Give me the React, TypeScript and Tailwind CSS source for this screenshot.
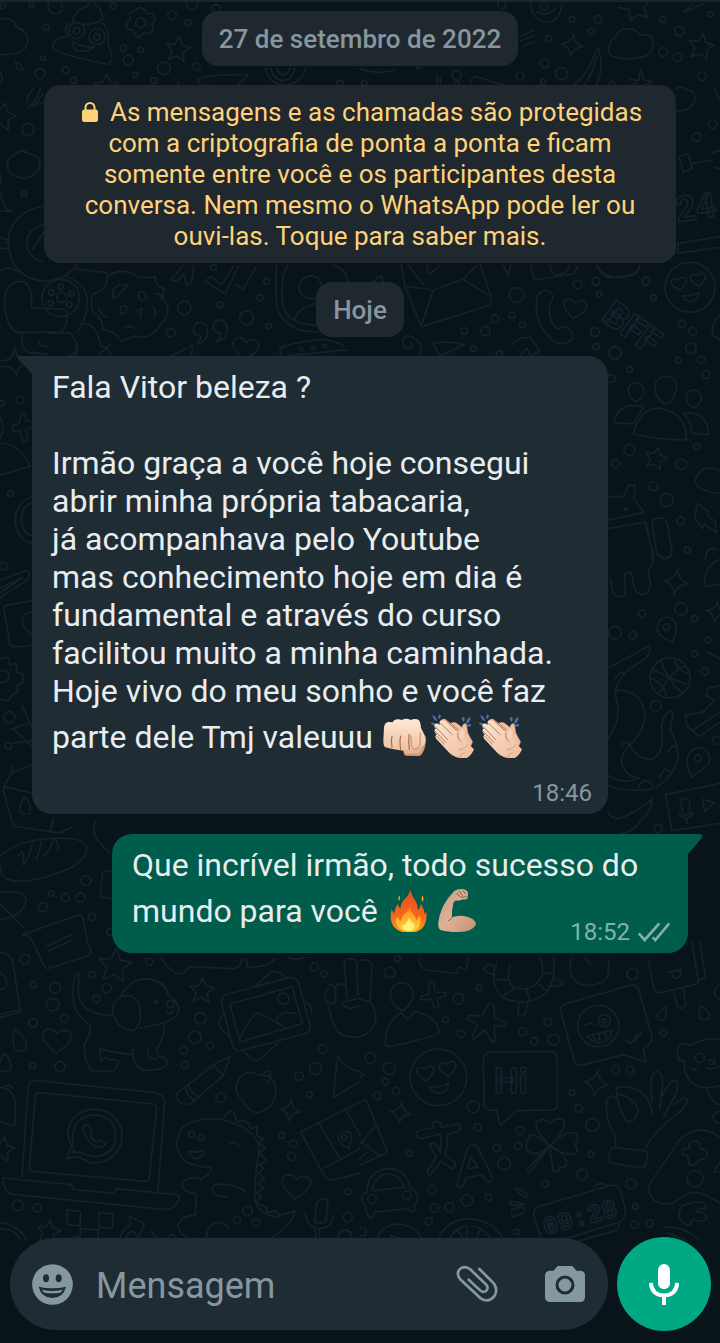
import { ReactNode } from "react";

type Ring = [number, number, number];

const topRings: Ring[] = [
    [166, 14, 22], [138, 76, 9], [128, 169, 7], [120, 215, 15], [197, 204, 10], [220, 235, 9], [370, 138, 9], [385, 175, 15],
    [422, 144, 8], [516, 40, 13], [564, 62, 9], [590, 194, 11], [492, 199, 19], [407, 219, 8], [462, 236, 9], [340, 12, 9],
    [576, 8, 16], [648, 20, 12], [84, 382, 18], [72, 576, 8], [8, 12, 9], [95, 8, 7], [553, 918, 20], [660, 908, 9], [740, 948, 21],
    [512, 992, 13], [800, 838, 9], [780, 888, 9], [806, 972, 8], [640, 796, 9], [185, 886, 15], [1020, 245, 9],
    [1120, 40, 9], [1370, 244, 7], [1290, 1076, 9],
];

const topRightRings: Ring[] = [
    [636, 52, 9], [714, 53, 12], [694, 88, 9], [566, 110, 9], [554, 184, 13], [604, 215, 18], [550, 240, 8], [480, 222, 12],
    [290, 220, 14], [178, 192, 8], [958, 87, 14], [908, 52, 9], [910, 150, 13], [953, 166, 13], [1026, 223, 13], [756, 247, 9],
    [1058, 367, 13], [1010, 405, 13], [1052, 36, 8], [425, 8, 12], [470, 879, 22], [653, 848, 13], [708, 838, 11], [718, 876, 8],
    [858, 838, 12], [880, 888, 9], [405, 950, 11], [456, 940, 9], [487, 969, 9], [377, 988, 14], [313, 987, 10], [705, 990, 12],
    [708, 1034, 9], [766, 1052, 18], [340, 1040, 8], [418, 1056, 10], [13, 243, 8],
];

const rightRings: Ring[] = [
    [18, 58, 12], [168, 56, 12], [190, 107, 9], [14, 210, 13], [18, 254, 9], [75, 273, 19], [276, 186, 11], [308, 208, 12],
    [303, 259, 16], [265, 295, 9], [333, 293, 11], [348, 337, 12], [119, 323, 9], [63, 350, 12], [118, 564, 16], [77, 605, 12],
    [274, 607, 16], [321, 553, 10], [190, 673, 13], [230, 714, 20], [272, 777, 12], [292, 864, 9],
    [157, 1055, 11], [75, 1112, 19], [129, 1120, 11], [273, 1041, 19], [313, 1070, 9], [353, 1134, 9], [314, 1176, 9], [344, 1229, 11],
    [197, 1332, 16], [204, 1700, 13], [380, 1435, 12],
];

const leftRings: Ring[] = [
    [60, 174, 12], [4, 184, 8], [31, 455, 9], [28, 1126, 17], [25, 1212, 10], [10, 673, 12], [258, 1616, 15], [154, 1655, 8],
    [196, 1667, 12], [241, 1667, 14], [129, 1696, 14], [276, 1725, 11], [330, 1770, 10],
];

const bottomRings: Ring[] = [
    [75, 51, 15], [99, 128, 9], [165, 137, 16], [158, 188, 19], [99, 243, 13], [193, 229, 12], [277, 98, 10], [320, 139, 14],
    [289, 171, 11], [98, 372, 9], [180, 374, 15], [448, 59, 11], [601, 229, 17], [585, 286, 19], [551, 324, 12], [629, 311, 11],
    [555, 369, 11], [662, 467, 14], [943, 75, 12], [972, 96, 9], [968, 321, 13], [947, 380, 18], [897, 403, 13], [928, 458, 9],
    [845, 580, 9], [879, 605, 11], [875, 643, 12], [1045, 749, 9], [1043, 826, 14], [1035, 884, 20], [53, 790, 16], [112, 798, 12],
    [743, 807, 14], [711, 835, 11], [768, 842, 11], [516, 890, 12],
];

const bottomRightRings: Ring[] = [
    [89, 92, 16], [112, 50, 9], [357, 137, 9], [295, 171, 16], [257, 233, 9], [303, 275, 11], [31, 348, 16], [88, 380, 18],
    [76, 419, 10], [108, 447, 11], [52, 461, 12], [340, 494, 18], [353, 556, 11], [148, 634, 9], [411, 618, 11], [474, 612, 11],
    [480, 566, 12], [433, 665, 19], [564, 240, 12], [488, 270, 12], [523, 298, 11], [581, 293, 17], [818, 96, 17], [911, 272, 10],
    [767, 383, 12], [810, 384, 12], [636, 452, 9], [656, 499, 12], [697, 549, 20], [694, 637, 9], [667, 698, 16], [555, 725, 10],
    [216, 743, 12], [223, 798, 12], [268, 796, 14], [321, 775, 17], [386, 766, 10], [206, 838, 11], [813, 726, 15], [826, 794, 8],
    [824, 848, 11], [869, 844, 11], [1005, 710, 24], [470, 870, 8],
];

function Rings({ items }: { items: Ring[] }) {
    return (
        <>
            {items.map(([cx, cy, r]) => (
                <circle key={`${cx}-${cy}`} cx={cx} cy={cy} r={r} />
            ))}
        </>
    );
}

function Star({ x, y, s = 1, turn = 0 }: { x: number; y: number; s?: number; turn?: number }) {
    return (
        <path
            transform={`translate(${x} ${y}) rotate(${turn}) scale(${s})`}
            d="M0 -36 L11 -12 L36 -9 L17 9 L23 35 L0 22 L-23 35 L-17 9 L-36 -9 L-11 -12 Z"
        />
    );
}

function Sparkle({ x, y, s = 1 }: { x: number; y: number; s?: number }) {
    return (
        <path
            transform={`translate(${x} ${y}) rotate(8) scale(${s})`}
            d="M0 -36 Q4 -6 34 0 Q5 5 0 36 Q-5 5 -34 0 Q-4 -5 0 -36 Z"
        />
    );
}

function Heart({ x, y, s = 1, turn = 0 }: { x: number; y: number; s?: number; turn?: number }) {
    return (
        <path
            transform={`translate(${x} ${y}) rotate(${turn}) scale(${s})`}
            d="M0 38 C-20 20 -44 6 -43 -14 C-42 -36 -12 -40 0 -20 C12 -40 42 -36 43 -14 C44 6 20 20 0 38 Z"
        />
    );
}

function LoveFace({ x, y, s = 1 }: { x: number; y: number; s?: number }) {
    return (
        <g transform={`translate(${x} ${y}) scale(${s})`}>
            <circle r="85" />
            <Heart x={-38} y={-12} s={0.6} turn={-8} />
            <Heart x={28} y={-26} s={0.6} turn={-8} />
            <path d="M-27 30 Q5 30 32 18 Q28 46 2 48 Q-20 46 -27 30 Z" />
        </g>
    );
}

function Doodles() {
    return (
        <svg
            aria-hidden="true"
            viewBox="0 0 720 1343"
            preserveAspectRatio="xMidYMin slice"
            className="absolute inset-0 h-full w-full [&_*]:[vector-effect:non-scaling-stroke]"
            fill="none"
            stroke="#16222a"
            strokeWidth="1.7"
            strokeLinecap="round"
            strokeLinejoin="round"
        >
            <g transform="scale(.3333)">
                <Rings items={topRings} />
                <path d="M0 52 Q38 40 50 76 Q90 88 82 124 Q74 160 0 158" />
                <path d="M218 58 Q222 24 262 12 Q276 0 274 -10 M218 58 Q260 80 308 52 Q306 20 284 4 M208 62 Q186 78 204 104 Q160 106 158 136 Q176 160 326 187 Q346 172 324 126 Q332 84 306 62 M216 118 Q250 140 284 134 Q262 154 230 144 Q216 134 216 118 Z" />
                <circle cx="230" cy="85" r="24" />
                <circle cx="230" cy="86" r="10" />
                <circle cx="291" cy="104" r="24" />
                <circle cx="291" cy="105" r="10" />
                <circle cx="422" cy="62" r="15" />
                <path d="M408 24 L420 16 L434 22 L440 34 L458 36 L466 54 L456 66 L460 84 L446 96 L432 92 L420 106 L404 100 L400 86 L384 82 L378 64 L390 52 L388 34 Z" />
                <Star x={534} y={140} turn={8} />
                <Star x={320} y={252} turn={0} />
                <Star x={8} y={342} s={1.1} turn={12} />
                <path d="M46 182 Q70 188 68 204 Q52 210 46 182 Z M0 210 Q14 230 0 246" />
                <path d="M80 300 Q84 276 102 260 M86 316 Q110 300 122 256 M100 316 L130 274 M106 308 L130 300 M592 236 Q604 216 746 218 L712 252 L604 250 Z M534 238 L534 254" />
                <path d="M796 198 Q806 246 852 250 Q904 246 918 198 M812 198 Q820 234 850 236 Q880 232 884 198 M830 198 Q838 220 850 218 Q868 214 870 198" />
                <path d="M38 462 Q64 436 88 456 Q124 460 120 494 Q106 530 64 528 Q24 520 22 492 Q24 466 38 462 Z M4 576 Q4 620 38 628 L0 626 M0 520 Q8 540 0 548" />
                <path d="M132 612 Q30 630 24 720 Q34 830 134 838 Q208 828 230 788 M132 668 Q82 680 80 724 Q86 770 130 780 M132 690 L98 742 M0 708 L22 712 M0 738 L24 740" />
                <path d="M0 806 Q30 790 60 812 M68 838 Q20 836 14 890 Q14 976 54 992 L184 990 Q210 960 196 922 L96 918 L94 880 Q90 844 68 838 Z M66 996 Q60 1040 88 1052 L142 1056 M146 994 L208 992 Q236 1010 228 1068 M196 822 Q262 846 262 900 Q260 954 232 990 M240 964 Q290 960 302 1030 Q330 1040 334 1066" />
                <circle cx="182" cy="888" r="56" />
                <circle cx="182" cy="854" r="8" />
                <circle cx="214" cy="876" r="8" />
                <circle cx="208" cy="908" r="8" />
                <circle cx="152" cy="904" r="8" />
                <circle cx="154" cy="872" r="8" />
                <path d="M222 800 L320 812 M320 826 Q350 800 390 812 Q424 834 466 824 Q462 850 494 862 Q478 886 502 908 Q510 940 484 964 Q470 992 438 1006 Q398 996 366 1020 Q344 986 308 984 Q312 950 280 932 Q268 900 280 874 Q324 866 320 826 Z M338 866 Q346 846 382 850 Q360 880 340 890 Z M362 916 Q378 904 382 922 Q374 938 362 934 Z M416 872 Q438 864 440 888 Q426 904 416 888 Z M456 914 Q470 922 464 944 M468 876 Q484 868 482 894 M410 928 L426 918 L420 946 M296 918 Q302 940 320 946 M370 978 Q388 968 404 980" />
                <path d="M512 834 L548 792 M512 834 L530 838 L552 816 L560 850 L574 846 L582 792 M616 838 L676 876 L716 792 M616 838 L632 824 L666 848 L700 792 M708 848 L730 862 L768 794" />
                <path d="M830 790 Q824 860 832 920 Q858 990 950 990 M850 820 Q840 900 856 930 Q880 966 946 970 M862 792 L850 820 M884 956 Q890 920 950 904 M1000 790 Q1040 800 1046 846" />
                <circle cx="932" cy="856" r="34" />
                <path d="M580 984 Q584 962 602 960 Q626 966 622 998 Q616 1022 590 1026 Q606 1012 602 1000 Q584 1004 580 984 Z M638 972 Q646 952 664 954 Q686 964 680 994 Q672 1016 648 1020 Q664 1006 660 992 Q642 996 638 972 Z" />
                <Heart x={736} y={1040} s={0.9} turn={8} />
                <path d="M504 1066 L578 1030 L574 1066 M838 1040 Q870 1020 978 1012 Q1010 1020 1032 1032 M840 1040 L842 1066 M862 1062 L1040 1044 M36 1062 L44 1036 L52 1062" />
                <circle cx="904" cy="1042" r="5" />
                <circle cx="940" cy="1037" r="5" />
                <circle cx="975" cy="1032" r="5" />
            </g>

            <g transform="translate(360 0) scale(.3333)">
                <Rings items={topRightRings} />
                <path d="M510 4 Q520 60 564 60 Q602 56 606 4 M534 30 Q560 46 586 20 M0 200 Q60 220 102 204" />
                <circle cx="552" cy="12" r="12" />
                <path d="M776 16 L806 22 L812 56 L834 38 L862 46 L852 18 L862 4 M970 30 L1030 6 M970 30 L1000 4" />
                <Sparkle x={636} y={130} s={0.95} />
                <path d="M480 104 L524 84 M482 118 L526 98 M486 134 L522 118" />
                <path d="M746 140 Q750 112 768 104 Q770 82 806 80 Q832 84 842 100 Q876 92 880 122 Q876 158 852 164 Q800 178 762 164 Q744 160 746 140 Z" />
                <Star x={1024} y={132} s={1.05} turn={10} />
                <path d="M640 252 Q690 210 708 144 L716 140 L718 154 Q734 190 708 252 M672 252 Q700 210 710 164 M810 232 L836 236 L842 202 L852 234 L876 238 L852 252 M816 252 L830 242" />
                <path d="M230 220 L232 252 M240 224 L242 252 M330 252 Q330 224 350 224 L440 252" />
                <path d="M948 260 Q964 250 976 262 Q1010 264 1004 300 Q984 332 948 326 M1064 258 L1080 296" />
                <path d="M956 462 L984 456 L998 500 L970 510 Z M1000 484 L1058 474 M1058 452 L1080 446 M1064 496 L1080 500" />
                <text x="952" y="660" fontSize="106" fontFamily="Roboto, sans-serif" fontWeight="700" transform="rotate(-8 952 660)">24</text>
                <path d="M954 724 L1080 704 M954 754 L1080 736 M954 724 L954 754" />
                <path d="M124 790 L134 852 L220 864 L310 832 L350 790 M134 852 L184 974 L390 910 L394 886 L310 832 M220 864 L184 970 M144 790 L190 848 M362 790 L394 886 M200 790 L208 818 L240 790 M40 838 L64 820 L70 840" />
                <path d="M430 790 L444 820 L452 790 M512 790 L524 834 L640 816 L656 790 M570 790 Q570 814 592 820 Q628 812 626 790 M710 794 Q740 834 800 824 Q840 812 838 790" />
                <path d="M530 892 Q536 866 558 864 Q580 870 578 890 L568 916 Q566 956 590 980 L616 974 Q646 990 638 1010 Q616 1034 584 1020 Q520 966 530 892 Z" />
                <Heart x={644} y={920} s={0.8} turn={8} />
                <path d="M132 1004 Q160 994 182 1030 Q186 1050 176 1056 M132 1004 Q120 1040 150 1040 Q160 1030 152 1020 M218 1024 Q270 1016 312 1028 L240 1062 Z M456 1030 Q470 1004 510 1006 L540 1046 L514 1064 L500 1038 L480 1062 M1080 940 Q1050 970 1058 1000 L1080 1012" />
            </g>

            <g transform="translate(590 260) scale(.3333)">
                <Rings items={rightRings} />
                <path d="M20 10 Q40 50 68 46 L130 38 Q150 28 150 10" />
                <LoveFace x={300} y={76} s={0.88} />
                <text x="30" y="172" fontSize="106" fontFamily="Roboto, sans-serif" fontWeight="900" transform="rotate(36 30 172)">BFF</text>
                <path d="M228 342 Q262 346 260 380 Q252 420 224 426 Q194 408 194 374 Q198 344 228 342 Z M138 362 Q164 368 162 392 Q152 416 138 418 Q114 408 114 382 Q120 362 138 362 Z M312 384 Q336 390 334 410 Q324 436 310 438 Q288 426 288 402 Q294 384 312 384 Z" />
                <path d="M130 516 Q146 442 204 438 Q288 448 290 534 Q210 534 130 516 Z M72 482 Q82 432 130 430 L162 434 L128 486 Z M280 454 Q352 444 356 518 L306 514 Q304 478 280 454 Z" />
                <Star x={198} y={587} s={0.9} turn={14} />
                <path d="M54 704 L100 704 L116 670 L136 670 L132 710 L162 752 L54 774 M54 800 L166 780 L192 890 M186 784 Q190 766 210 768 Q226 768 232 786 L246 866 Q244 888 224 890 Q206 888 200 870 Z" />
                <circle cx="107" cy="742" r="4" />
                <path d="M390 626 Q330 600 314 660 Q330 692 390 694 M322 724 L356 750 L354 764 L376 778 L380 812 L344 786 L338 800 L314 768 Z M346 890 Q350 850 382 864" />
                <path d="M60 950 L68 990 Q80 1014 106 1000 L104 936 L124 932 L134 980 Q146 1004 172 994 L182 970 L174 924 L188 910 L186 870 M204 874 Q220 902 246 880 M390 892 Q340 910 344 970 L346 974 L390 966" />
                <Sparkle x={258} y={960} s={1.1} />
                <Sparkle x={378} y={1050} s={0.9} />
                <path d="M248 1140 Q200 1124 202 1100 Q204 1064 234 1066 Q264 1076 258 1110 Z" />
                <circle cx="229" cy="1096" r="10" />
                <circle cx="240" cy="1248" r="60" />
                <path d="M188 1222 Q240 1250 298 1270 M206 1296 Q240 1230 286 1212 M212 1196 Q230 1250 276 1294 M182 1250 Q220 1260 230 1306 M254 1190 Q254 1220 298 1236" />
                <path d="M54 1218 Q130 1180 178 1150 Q190 1180 136 1210 Q80 1240 76 1300 Q100 1370 54 1430 M76 1286 Q150 1280 164 1350 Q170 1400 118 1450 Q90 1480 96 1510 Q116 1550 148 1548 Q100 1570 54 1540 M118 1450 Q150 1500 190 1490 Q226 1470 214 1400 Q220 1350 246 1346 Q250 1370 240 1400 Q270 1460 262 1500 Q236 1570 170 1584 Q100 1590 54 1570 M76 1250 Q96 1220 104 1240 M92 1452 Q110 1430 120 1450 M236 1470 Q250 1440 262 1460 M210 1548 Q220 1510 240 1530 M144 1578 Q160 1540 190 1570" />
                <path d="M352 1170 L390 1190 M390 1270 L352 1280 L350 1300 L372 1316 L340 1350 L286 1360 L290 1390 L326 1424 L390 1380 M310 1404 L390 1350 M306 1546 Q284 1500 294 1480 Q310 1450 342 1460 Q366 1480 356 1506 Z" />
                <circle cx="323" cy="1489" r="10" />
                <path d="M226 1598 L390 1564 M226 1598 L246 1706 L390 1684 M272 1616 Q286 1600 298 1616 L300 1650 Q290 1666 278 1654 Z M264 1650 Q284 1686 310 1652 M288 1672 L292 1684 M338 1612 L372 1622 L344 1650 Z M54 1650 Q60 1670 90 1670 Q140 1650 186 1612 Q190 1640 150 1680 Q120 1720 54 1720" />
            </g>

            <g transform="translate(0 340) scale(.3333)">
                <Rings items={leftRings} />
            </g>
            <g transform="translate(0 340) scale(.3333 .472)">
                <path d="M0 40 Q38 42 46 14 Q50 40 84 44 Q50 50 50 72 Q44 50 0 52 M120 0 Q110 10 146 10 M230 0 Q238 24 200 32 M300 24 L330 6" />
                <path d="M62 154 L76 152 L78 166 L92 168 M62 154 L58 172 L36 178 L40 190 L60 188 L70 212 L84 208 L78 186 L96 180 M0 160 Q18 180 0 204 M0 214 Q60 214 90 264 L0 282" />
                <path d="M96 328 Q46 340 46 380 Q52 420 96 426 M96 342 Q64 346 64 380 Q68 406 96 410 M0 504 L80 484 Q94 490 82 504 L0 542 M0 522 L70 498 L0 532" />
                <path d="M96 548 L20 558 Q8 560 12 568 L30 640 Q36 650 96 642 M96 572 Q66 574 66 592 Q72 612 96 620" />
                <path d="M0 672 L24 668 L30 684 L48 680 L50 700 L70 704 L68 722 L52 726 L54 742 L36 748 L26 760 L0 756 M0 696 Q26 694 28 708 Q24 722 0 722" />
                <path d="M66 770 L96 816 M34 820 L90 806 L40 820 L96 856 M40 850 L96 844 M36 898 L36 912 L96 896 M36 912 L12 940 Q8 946 12 956 L40 1026 L180 1040 L214 1028 M12 942 L96 956 M160 1010 L150 1038 M74 964 Q100 984 88 998 Q66 1006 58 990 Q60 976 74 964 Z" />
                <path d="M0 1090 Q40 1062 120 1054 Q260 1044 260 1072 Q262 1104 170 1126 Q60 1154 10 1134 Q0 1120 0 1110 M56 1088 Q74 1066 70 1108 Q84 1100 96 1066 M108 1098 Q120 1080 124 1060 M130 1090 Q150 1080 158 1056 Q176 1050 174 1078 M0 1166 Q80 1160 78 1184 Q64 1220 0 1224 M0 1190 L70 1240 M300 1176 L308 1124 L334 1120 M300 1176 L336 1180 M286 1016 Q276 1030 290 1054 L330 1084" />
                <path d="M98 1271 L90 1260 L66 1256 L236 1214 Q246 1214 250 1222 L262 1271 M140 1280 L216 1255 M146 1290 L214 1268" />
            </g>

            <g transform="translate(0 940) scale(.3333)">
                <Rings items={bottomRings} />
                <path d="M98 0 L130 68 Q136 82 150 78 L262 42 Q276 36 272 24 L262 0 M0 30 Q36 34 40 70 L62 210 L0 226 M0 216 L60 204 M0 92 Q30 110 16 138 L0 142" />
                <Star x={345} y={68} s={1.35} turn={6} />
                <path d="M44 258 Q90 300 76 322 Q56 336 42 316 Q36 290 44 258 Z M14 334 Q40 366 30 384 Q16 392 0 384 M0 360 Q6 342 14 334" />
                <Heart x={170} y={296} turn={4} />
                <path d="M234 90 Q214 110 220 180 Q228 220 270 250 Q274 280 252 306 Q252 360 276 388 L330 388 Q356 380 356 356 Q340 350 326 354 Q320 338 302 358 L300 320 Q330 330 398 338 M234 90 Q240 96 234 140 Q234 220 340 220 M360 166 Q390 110 440 110 Q500 120 504 160 Q540 180 536 210 Q530 240 420 258 M360 166 Q336 180 338 212 Q354 266 400 266 Q426 250 420 200 Q410 156 380 162 Q366 160 360 166 M430 112 Q476 108 496 136 M492 250 Q494 290 470 320 L476 344 Q504 344 500 370 Q486 384 430 386 Q396 370 398 318 M442 320 L446 346 L470 352 M500 212 Q510 222 520 206" />
                <circle cx="469" cy="179" r="5" />
                <circle cx="512" cy="186" r="11" />
                <path d="M484 50 Q520 100 548 96 L568 74 L700 80 Q726 74 726 50 M740 50 L742 74 Q800 80 826 50 M866 46 Q890 58 914 46" />
                <Star x={606} y={144} turn={4} />
                <path d="M664 180 Q664 162 684 156 L870 106 Q890 106 896 122 L930 250 Q932 270 914 276 L722 326 Q704 326 698 312 Z M690 186 L876 134 L908 244 L720 300 Z M720 290 Q750 220 776 212 L866 262 M830 232 Q840 206 890 214 M768 130 L814 90 Q830 82 856 104 M668 220 Q650 240 658 254 L690 286 M730 326 L760 356 L780 352 L836 302 M918 180 Q936 190 934 214" />
                <circle cx="850" cy="170" r="17" />
                <path d="M690 344 L644 366 L530 454 Q526 470 544 486 L572 486 L670 400 Z M644 366 Q650 390 670 396 M556 436 Q560 460 582 474 M566 428 Q570 450 594 464" />
                <path d="M768 396 Q730 380 712 420 Q700 450 724 470 Q750 520 780 510 Q820 500 828 450 Q826 400 790 400 L768 396 M790 400 Q790 386 810 388 Q816 410 800 424" />
                <path d="M984 132 Q996 120 1004 140 M1032 60 Q1050 40 1070 60 L1074 160 M1032 60 L1042 168 M984 140 Q968 160 980 180 Q1000 192 1008 176 L1006 140 M1006 136 Q1020 116 1036 132 M984 190 Q1000 250 1014 270 Q1040 290 1080 284 M1030 180 L1080 168 M1030 180 Q1028 196 1050 200 L1080 192" />
                <path d="M1014 344 Q1004 400 1002 466 L1080 418 M1014 344 Q1040 384 1080 388" />
                <path d="M66 706 L84 436 Q88 414 112 416 L466 452 Q494 458 494 480 L474 748 M88 680 L106 462 Q108 450 120 452 L460 486 Q470 488 470 498 L448 706 Q446 718 436 718 L100 688 Q88 686 88 680 Z M10 708 L214 728 L220 742 L340 754 L350 740 L530 758 Q544 762 534 780 Q520 804 490 802 L30 756 Q8 740 10 708 Z" />
                <path d="M200 650 L214 614 Q190 560 226 522 Q270 488 324 510 Q380 546 362 610 Q330 670 270 662 L236 644 Z M222 628 Q206 560 244 530 Q290 506 328 534 Q362 574 336 620 Q300 660 240 630 L216 632 Z M250 556 Q258 542 268 552 L276 572 L272 582 Q280 596 290 600 L300 594 L318 604 Q306 622 282 612 Q252 590 250 556 Z" />
                <path d="M0 436 Q40 440 46 480 L44 552 L0 540 M14 434 Q30 424 40 440" />
                <Star x={8} y={620} s={1} turn={10} />
                <path d="M666 532 Q580 524 544 560 Q514 620 552 654 Q580 676 634 676 Q630 700 604 710 Q560 702 546 724 Q544 750 590 756 L586 820 Q540 820 534 852 Q540 888 590 896 M666 532 L688 510 Q704 500 710 540 L732 536 L748 546 L752 560 L772 554 L770 580 L790 590 L778 604 L796 620 L778 634 L800 656 L778 668 L790 680 L776 694 L794 710 L774 724 L792 738 L770 752 L784 764 L768 780 L800 798 L802 812 L826 806 L836 820 L884 808 Q880 850 800 896 M670 534 Q770 560 778 620 Q760 740 766 780 Q780 820 836 826 M736 748 Q690 720 644 728 Q630 740 644 758 Q660 766 682 764 M690 604 Q706 598 716 610 M564 628 Q590 632 612 626 Q610 650 588 650 Q570 644 564 628 Z M620 890 Q620 850 650 842 Q680 840 686 860" />
                <circle cx="575" cy="578" r="9" />
                <circle cx="603" cy="586" r="9" />
                <Sparkle x={871} y={505} s={0.9} />
                <path d="M902 570 L1080 480 M902 570 L972 700 Q980 714 1000 714 L1080 694 M970 680 L1080 620 M956 542 L1020 650 M1040 506 L1080 580 M1046 620 Q1010 600 1016 580 Q1028 564 1050 572 L1056 590 Z" />
                <circle cx="1033" cy="587" r="8" />
                <Heart x={888} y={734} s={1} turn={6} />
                <path d="M950 784 Q962 764 984 776 L978 836 Q964 850 944 838 Z M916 812 Q918 854 958 860 Q996 856 1000 826 M946 860 L950 894 M958 864 L960 894" />
                <path d="M200 804 L242 808 L240 852 L202 848 Z M296 812 L340 816 L338 858 L296 856 Z M242 852 L240 884 L220 884 L220 900 M296 856 L294 886 L304 894 M240 860 L296 864 M386 822 L434 846 L414 890 L400 868 Q380 870 374 896 M386 822 L394 848 Q364 860 358 896 M454 870 L478 896 M0 842 Q60 850 80 896 M0 860 Q50 860 60 896" />
                <Star x={146} y={868} s={0.95} turn={10} />
            </g>

            <g transform="translate(360 940) scale(.3333)">
                <Rings items={bottomRightRings} />
                <path d="M0 56 Q20 46 36 66 L30 180 Q60 220 40 250 Q30 276 0 284 M0 170 L28 180 M178 50 Q176 72 196 84 L290 94 L296 74 L318 84 L326 50" />
                <path d="M124 122 Q160 126 160 160 Q150 196 128 206 Q96 196 90 158 Q92 126 124 122 Z M76 300 Q76 240 122 212 L144 232 L164 208 Q230 220 238 272 Q236 282 90 314 Q76 314 76 300 Z M206 120 L222 122 L224 150 L258 152 L256 162 L230 170 L236 196 L222 198 L214 172 L182 174 L182 164 L208 156 Z" />
                <path d="M388 182 L402 190 L404 226 L438 240 L436 250 L402 254 L406 296 L396 300 L374 264 L342 292 L336 284 L354 250 L322 230 L324 220 L366 222 Z" />
                <path d="M412 60 Q384 120 426 166 Q500 200 560 152 Q590 110 580 50 M450 70 Q434 120 466 138 Q520 150 546 100 Q552 70 540 50 M408 76 Q380 60 372 80 Q376 96 406 98 M578 108 L610 120 Q610 136 562 132 M476 178 L474 214 Q486 230 496 214 L504 182 M410 112 L448 116 M430 162 L464 138 M510 176 L500 144 M560 146 L530 122 M580 96 L550 92 M634 50 Q620 100 654 124 Q700 140 740 112 Q750 80 744 50 M676 50 L694 70" />
                <path d="M864 50 L882 140 Q888 154 904 152 L1004 128 Q1016 124 1014 110 L996 0 M1014 118 L1036 104 L1020 0 M940 148 L952 194 Q968 206 978 188 L970 142 M922 92 L964 82 M934 90 Q938 112 954 108 Q966 100 960 84" />
                <path d="M918 196 Q924 230 906 236 Q890 234 892 218 Q898 206 918 196 Z M1022 192 Q1054 210 1048 226 Q1036 240 1020 228 Q1014 214 1022 192 Z M1080 126 Q1060 140 1064 160 L1080 172" />
                <path d="M602 206 Q600 192 616 186 L810 130 Q828 126 836 142 L876 282 Q880 300 850 320 L858 360 L790 338 L664 370 Q648 370 642 356 Z M798 294 L812 306 L832 274 M822 300 L844 270" />
                <circle cx="715" cy="252" r="62" />
                <circle cx="733" cy="236" r="18" />
                <circle cx="733" cy="236" r="6" />
                <path d="M674 250 Q690 238 704 250 M682 282 L756 264 Q752 296 722 304 Q694 302 682 282 Z M698 280 L704 294 M716 276 L720 298 M734 272 L738 288" />
                <LoveFace x={235} y={406} />
                <path d="M390 330 L574 328 Q592 332 592 350 L592 486 Q592 502 576 504 L470 506 L420 550 L410 506 L388 504 Q374 500 372 484 L370 352 Q374 332 390 330 Z" />
                <text x="402" y="452" fontSize="104" fontFamily="Roboto, sans-serif" fontWeight="700">Hi</text>
                <path d="M0 388 L10 400 L0 408 M0 480 L18 474 L80 622 L78 634 L0 670 M0 606 L50 546 M8 602 L56 640 M0 650 L20 632" />
                <Sparkle x={122} y={512} s={0.9} />
                <Sparkle x={708} y={424} s={1.1} />
                <path d="M168 574 Q168 564 220 558 L220 542 Q232 532 242 544 L242 556 L296 546 Q306 556 296 568 L264 576 Q262 610 256 640 L286 662 Q288 682 276 680 L242 658 L212 698 Q198 700 204 684 L230 644 Q204 610 214 604 Q230 600 240 630 L244 576 L180 590 Q168 586 168 574 Z" />
                <path d="M324 616 Q338 604 352 614 L398 706 Q398 722 382 720 L366 698 L318 708 L308 734 Q294 740 290 728 Z M332 644 L322 680 L354 676 Z" />
                <path d="M570 612 Q520 560 530 540 Q548 522 570 544 Q590 520 612 536 Q616 570 570 612 Q510 560 508 590 Q494 600 500 624 Q530 650 570 612 Q620 560 650 576 Q660 594 644 606 Q660 630 640 638 Q610 640 570 612 Q574 660 580 688 Q596 694 600 676 Q620 680 620 660 Q610 630 570 612 Q540 640 502 684 Q500 694 510 690 Z" />
                <path d="M770 454 Q762 434 790 434 Q870 440 878 520 M770 454 Q780 520 806 542 Q836 530 834 500 Q820 466 770 454 M770 470 Q750 450 740 480 Q734 530 764 580 L768 612 M876 480 Q868 400 884 390 Q906 384 908 420 L900 500 M908 460 Q930 410 948 416 Q960 430 946 460 L910 526 M940 490 Q970 460 982 472 Q980 496 946 520 Q880 570 856 618 M760 616 L850 626 Q866 630 862 646 L854 674 Q848 680 760 664 Q744 660 748 640 Q750 620 760 616 Z" />
                <path d="M956 356 Q946 310 964 304 L996 310 Q1030 286 1080 292 M956 356 L972 356 Q970 430 1040 438 L1080 432 M1040 440 Q1050 480 1080 490 M1080 508 Q1056 510 1060 530 Q1064 544 1080 542 M1044 356 Q1056 348 1066 356 Q1062 370 1050 366 M1040 378 Q1056 384 1080 372 M994 380 L1012 384" />
                <circle cx="1019" cy="347" r="14" />
                <path d="M960 592 Q1020 540 1080 586 M960 592 L868 728 Q862 770 900 784 Q930 790 950 776 Q990 740 1030 756 L1080 782 M986 604 Q1004 590 1018 602 L1020 620 Q1044 620 1042 640 Q1036 656 1018 652 Q1004 678 986 666 L984 642 Q960 640 968 624 Q976 616 988 620 Z M1080 660 L1062 690 L1080 690" />
                <path d="M960 830 Q950 790 990 784 Q1040 770 1036 800 Q1010 796 1010 810 Q1040 810 1040 830 Q1030 846 1000 830 Q990 840 992 850 Q970 850 960 830 Z M914 856 Q970 850 1020 896 M920 872 L980 896" />
                <path d="M20 752 Q22 690 80 680 Q140 680 150 736 Q178 750 172 780 L162 788 L164 806 Q150 816 146 800 L44 810 L40 824 Q26 832 20 812 L16 790 Q4 782 6 764 Q10 750 20 752 Z M36 746 Q44 700 84 696 Q120 696 132 736 Z" />
                <circle cx="36" cy="772" r="13" />
                <circle cx="140" cy="760" r="13" />
                <path d="M50 896 Q60 850 116 846 Q174 852 186 896 M94 880 L96 896 M94 880 L140 896 M236 896 Q250 836 326 830 Q410 836 430 896 M266 896 Q280 860 320 850 L322 896 M336 852 Q380 860 392 896 M288 860 L316 896 M360 862 L348 896 M0 856 L18 862 L16 880 L0 884" />
                <path d="M466 740 Q490 740 504 764 Q490 770 466 740 Z M452 778 L492 786 Q490 794 452 788 Z M454 806 Q480 790 494 800 Q496 818 456 824 Z" />
                <path d="M522 822 Q518 802 536 794 L754 730 Q774 728 780 742 L796 800 Q798 830 780 840 L600 896 M522 822 L544 892 M700 736 Q716 718 740 730 M776 846 Q780 860 768 866 L660 896" />
                <text x="556" y="880" fontSize="76" fontFamily="Liberation Mono, monospace" fontWeight="700" transform="rotate(-15 556 880)">09:28</text>
            </g>
        </svg>
    );
}

function Emoji({ box, label, children }: { box: string; label: string; children: ReactNode }) {
    return (
        <svg role="img" aria-label={label} viewBox={box} className="inline-block h-12 w-12 align-[-10px]">
            {children}
        </svg>
    );
}

function Fist() {
    return (
        <Emoji box="57 30 144 144" label="Soco">
            <defs>
                <linearGradient id="fist" x1="0" y1="0" x2="0" y2="1">
                    <stop offset="0" stopColor="#fce9d8" />
                    <stop offset="1" stopColor="#efc19f" />
                </linearGradient>
            </defs>
            <path d="M124 146 L176 144 L191 116 Q193 140 180 162 Q176 168 168 168 L132 167 Q123 164 124 146 Z" fill="#d99a7c" />
            <path d="M66 82 Q68 66 82 66 L92 67 Q96 57 110 58 L120 60 Q132 52 146 60 Q160 54 170 60 Q176 66 177 84 L191 112 Q192 132 180 142 L170 150 L124 152 Q96 150 70 142 Q64 138 64 124 Z" fill="url(#fist)" />
            <path d="M126 148 Q150 156 178 140 Q180 154 170 160 L134 161 Q126 158 126 148 Z" fill="#e8b595" />
            <path d="M90 108 Q86 122 90 142 M116 108 Q112 124 116 148 M141 104 Q139 130 142 148" fill="none" stroke="#a86f55" strokeWidth="3.5" strokeLinecap="round" />
            <path d="M147 106 Q146 140 154 148 Q172 148 174 132 L175 98" fill="none" stroke="#c08767" strokeWidth="3" />
        </Emoji>
    );
}

function Clap() {
    return (
        <Emoji box="201 30 144 144" label="Palmas">
            <defs>
                <linearGradient id="clap" x1="0" y1="0" x2="1" y2="1">
                    <stop offset="0" stopColor="#fce6d3" />
                    <stop offset="1" stopColor="#edbb99" />
                </linearGradient>
            </defs>
            <g fill="#4b70ae">
                <path d="M208 67 L222 71 L221 78 L208 73 Z M210 46 Q216 46 221 52 L227 64 Q216 62 210 46 Z M231 43 L238 47 L232 57 L228 53 Z" />
                <path d="M299 54 L306 50 L309 60 L303 66 Z M324 51 Q328 58 322 66 L312 72 Q312 58 324 51 Z M313 74 L327 72 L327 79 L315 80 Z" />
            </g>
            <path d="M236 66 Q238 54 250 58 L266 70 Q276 62 290 74 L300 82 Q304 66 313 72 L318 100 L332 126 L320 152 L280 150 Z" fill="#edc0a3" stroke="#b9835f" strokeWidth="1.5" />
            <path d="M217 74 Q226 66 236 76 L232 68 Q234 58 246 62 L288 98 Q292 84 300 86 Q308 90 306 108 L318 134 Q326 136 336 148 Q326 172 304 179 L292 174 Q270 170 254 150 L224 118 Q216 108 224 104 L218 96 Q216 86 222 86 Q216 82 217 74 Z" fill="url(#clap)" />
            <path d="M220 80 L258 120 M220 94 L252 128 M224 108 L246 132 M237 70 L270 104 M250 58 L284 92 M270 72 L292 92 M288 98 Q284 116 296 124" fill="none" stroke="#b57c5c" strokeWidth="3" strokeLinecap="round" />
            <path d="M292 174 Q296 160 308 158 M304 179 L312 172 M318 134 Q304 150 290 150" fill="none" stroke="#cf997a" strokeWidth="2.5" />
        </Emoji>
    );
}

function Fire() {
    return (
        <Emoji box="45 132 144 144" label="Fogo">
            <defs>
                <linearGradient id="fire" x1="0" y1="0" x2="0" y2="1">
                    <stop offset="0" stopColor="#ee4a22" />
                    <stop offset=".6" stopColor="#f5661c" />
                    <stop offset="1" stopColor="#f9a01b" />
                </linearGradient>
                <linearGradient id="flame" x1="0" y1="0" x2="0" y2="1">
                    <stop offset="0" stopColor="#ff8a1e" />
                    <stop offset="1" stopColor="#ffd83b" />
                </linearGradient>
            </defs>
            <path d="M86 166 Q90 174 84 184 Q79 176 86 166 Z M154 166 Q161 176 155 186 Q149 178 154 166 Z" fill="#f4a024" />
            <path d="M117 148 Q122 168 134 184 Q141 194 140 210 Q148 208 149 190 Q160 208 162 224 L166 214 Q170 250 150 268 Q134 280 112 279 Q84 278 68 260 Q54 240 62 208 L70 222 Q70 206 80 192 Q84 202 88 206 Q88 192 98 180 Q116 166 117 148 Z" fill="url(#fire)" />
            <path d="M116 200 Q118 214 128 224 Q136 232 134 242 Q142 238 146 226 Q154 250 142 264 Q130 276 112 275 Q88 273 78 256 Q72 242 78 230 Q84 242 92 244 Q90 230 102 220 Q114 212 116 200 Z" fill="url(#flame)" />
            <path d="M114 234 Q120 246 130 252 Q132 270 112 273 Q92 270 94 254 Q100 258 104 250 Q112 244 114 234 Z" fill="#fff27a" />
        </Emoji>
    );
}

function Biceps() {
    return (
        <Emoji box="189 132 144 144" label="Força">
            <defs>
                <linearGradient id="arm" x1="0" y1="0" x2="1" y2="1">
                    <stop offset="0" stopColor="#c9977d" />
                    <stop offset=".5" stopColor="#deb298" />
                    <stop offset="1" stopColor="#c58f70" />
                </linearGradient>
            </defs>
            <path d="M249 154 Q258 146 276 147 Q290 150 291 160 L290 174 Q286 180 276 178 L262 182 Q246 180 246 196 Q242 212 243 232 Q262 224 288 230 Q312 236 315 252 Q310 268 286 274 Q240 280 208 270 Q200 264 202 248 Q206 210 230 176 Z" fill="url(#arm)" />
            <path d="M243 232 Q240 240 232 242 M258 160 Q264 172 276 172 M266 154 L274 166 M276 152 L284 162 M276 172 L288 170" fill="none" stroke="#8d5e48" strokeWidth="3" strokeLinecap="round" />
        </Emoji>
    );
}

function Notice() {
    return (
        <button
            type="button"
            className="mx-11 mt-[19px] rounded-2xl bg-[#1e282e] px-8 pt-3 pb-[11px] text-center text-[26px] leading-[31px] text-[#ffd279]"
        >
            <svg aria-hidden="true" viewBox="0 0 16 20" className="mr-3 ml-1 inline-block h-5 w-4 align-[-1px]">
                <path d="M3.5 9 V5.5 a4.5 4.5 0 0 1 9 0 V9" fill="none" stroke="#ffd279" strokeWidth="2" />
                <rect y="7.5" width="16" height="12.5" rx="2.5" fill="#ffd279" />
            </svg>
            As mensagens e as chamadas são protegidas com a criptografia de ponta a ponta e ficam somente entre você e os
            participantes desta conversa. Nem mesmo o WhatsApp pode ler ou ouvi-las. Toque para saber mais.
        </button>
    );
}

function DateChip({ children }: { children: ReactNode }) {
    return (
        <div className="self-center rounded-2xl bg-[#1e282e] px-[17px] pt-[13px] pb-[11px] text-[26px] leading-[31px] font-medium text-[#87969f]">
            {children}
        </div>
    );
}

function Composer() {
    return (
        <form className="mt-auto flex items-center gap-[9px] pr-[9px] pb-3 pl-2.5" onSubmit={(e) => e.preventDefault()}>
            <div className="flex h-[92px] min-w-0 flex-1 items-center rounded-full bg-[#202c33] pr-[23px] pl-[22px] text-[#8597a1]">
                <button type="button" aria-label="Emojis" className="shrink-0">
                    <svg viewBox="0 0 123 123" className="h-[41px] w-[41px]">
                        <circle cx="61.5" cy="61.5" r="61" fill="currentColor" />
                        <g fill="#202c33">
                            <ellipse cx="42" cy="43" rx="9" ry="12" />
                            <ellipse cx="80" cy="43" rx="9" ry="12" />
                            <path d="M20 68 Q61 78 102 68 Q94 101 61 102 Q28 101 20 68 Z" />
                        </g>
                        <path d="M30 77 Q61 85 92 77 Q88 85 84 86 Q61 90 38 86 Q32 83 30 77 Z" fill="currentColor" />
                    </svg>
                </button>
                <input
                    type="text"
                    aria-label="Mensagem"
                    placeholder="Mensagem"
                    className="ml-[23px] h-14 min-w-0 flex-1 bg-transparent pt-1 text-[36px] text-[#e9edef] outline-none placeholder:text-[#8597a1]"
                />
                <button type="button" aria-label="Anexar" className="shrink-0">
                    <svg viewBox="0 0 126 114" className="h-[38px] w-[42px]" fill="none" stroke="currentColor" strokeWidth="8" strokeLinecap="round">
                        <path d="M70 12 L114 56 Q126 74 116 92 Q98 116 74 100 L12 42 Q-1 24 12 12 Q26 0 44 14 L92 60 Q98 70 90 78 Q82 84 72 76 L38 44" />
                    </svg>
                </button>
                <button type="button" aria-label="Câmera" className="ml-[47px] shrink-0">
                    <svg viewBox="0 0 120 108" className="h-9 w-10">
                        <path d="M42 0 H78 Q83 0 86 4 L94 14 H106 Q120 15 120 28 V94 Q119 108 106 108 H14 Q1 107 0 94 V28 Q1 15 14 14 H26 L34 4 Q37 0 42 0 Z" fill="currentColor" />
                        <circle cx="60" cy="57" r="24" fill="none" stroke="#202c33" strokeWidth="9" />
                    </svg>
                </button>
            </div>
            <button type="button" aria-label="Gravar áudio" className="flex h-[94px] w-[94px] shrink-0 items-center justify-center rounded-full bg-[#00a884]">
                <svg viewBox="0 0 90 124" className="h-[41px] w-[30px]">
                    <rect x="27" y="0" width="36" height="76" rx="18" fill="#fff" />
                    <path d="M5 57 Q8 94 45 95 Q82 94 85 57 M45 95 V124" fill="none" stroke="#fff" strokeWidth="12" />
                </svg>
            </button>
        </form>
    );
}

export default function App() {
    return (
        <div className="relative min-h-screen overflow-hidden border-t-2 border-[#1a252b] bg-[#08131a] font-['Roboto',sans-serif]">
            <Doodles />
            <main className="relative flex min-h-[calc(100vh-2px)] flex-col pt-[9px]">
                <DateChip>27 de setembro de 2022</DateChip>
                <Notice />
                <div className="mt-[19px] flex flex-col">
                    <DateChip>Hoje</DateChip>
                </div>

                <article className="relative mt-[19px] ml-8 w-4/5 rounded-[20px] rounded-tl-none bg-[#202c33] px-5 pt-3 pb-[7px]">
                    <svg aria-hidden="true" viewBox="0 0 16 18" className="absolute top-0 -left-4 h-[18px] w-4">
                        <path d="M16 0 H3 Q0 1 2 3 L16 18 Z" fill="#202c33" />
                    </svg>
                    <p className="text-[32px] leading-[38px] text-[#e9edef]">
                        Fala Vitor beleza ?
                        <br />
                        <br />
                        Irmão graça a você hoje consegui
                        <br />
                        abrir minha própria tabacaria,
                        <br />
                        já acompanhava pelo Youtube
                        <br />
                        mas conhecimento hoje em dia é fundamental e através do curso facilitou muito a minha caminhada.
                        <br />
                        Hoje vivo do meu sonho e você faz parte dele Tmj valeuuu <Fist />
                        <Clap />
                        <Clap />
                    </p>
                    <time className="-mr-1 mt-[21px] block text-right text-[24px] leading-7 text-[#8597a1]">18:46</time>
                </article>

                <article className="relative mt-5 mr-8 flow-root w-4/5 self-end rounded-[20px] rounded-tr-none bg-[#005c4b] px-5 pt-3 pb-[7px]">
                    <svg aria-hidden="true" viewBox="0 0 16 22" className="absolute top-0 -right-4 h-[22px] w-4">
                        <path d="M0 0 H12 Q16 1 13 5 L0 20 Z" fill="#005c4b" />
                    </svg>
                    <p className="text-[32px] leading-[38px] text-[#e9edef]">
                        Que incrível irmão, todo sucesso do mundo para você <Fire />
                        <Biceps />
                        <span className="float-right mt-[34px] -mr-0.5 flex items-center gap-2 text-[24px] leading-7 text-[#82b3aa]">
                            <time>18:52</time>
                            <svg role="img" aria-label="Entregue" viewBox="0 0 96 60" className="h-5 w-8" fill="none" stroke="currentColor" strokeWidth="8">
                                <path d="M2 34 L20 54 L64 4 M44 46 L52 54 L94 4" />
                            </svg>
                        </span>
                    </p>
                </article>

                <Composer />
            </main>
        </div>
    );
}
